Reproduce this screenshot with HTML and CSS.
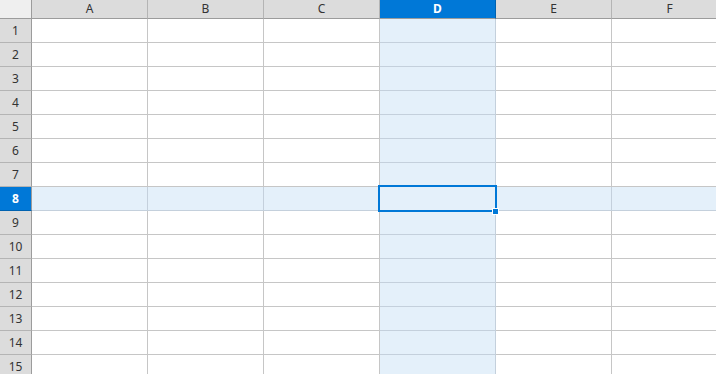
FILE: index.html
```html
<!DOCTYPE html>
<html lang="en">
<head>
  <meta charset="UTF-8">
  <title>Sheet</title>
  <link rel="stylesheet" href="styles.css">
</head>
<body>
  <!-- 스프레드시트 그리드 -->
  <div class="sheet" id="sheet"></div>

  <script>
    // 그리드 만들기
    const cols = ['A', 'B', 'C', 'D', 'E', 'F'];
    const activeCol = 'D';
    const activeRow = 8;
    const sheet = document.getElementById('sheet');
    let html = '<div class="corner"></div>';

    cols.forEach(c => {
      html += `<div class="col-head${c === activeCol ? ' active' : ''}">${c}</div>`;
    });

    for (let r = 1; r <= 15; r++) {
      html += `<div class="row-head${r === activeRow ? ' active' : ''}">${r}</div>`;
      cols.forEach(c => {
        let cls = 'cell';
        if (c === activeCol || r === activeRow) cls += ' hl';
        if (c === activeCol && r === activeRow) cls += ' selected';
        html += `<div class="${cls}"></div>`;
      });
    }
    sheet.innerHTML = html;
  </script>
</body>
</html>
```

FILE: styles.css
```css
/* 기본 스타일 */
body {
  margin: 0;
  font-family: "Noto Sans", "Open Sans", sans-serif;
  font-size: 12px;
  color: #333;
  background: #fff;
  overflow: hidden;
}

.sheet {
  display: grid;
  grid-template-columns: 32px repeat(6, 116px);
  grid-template-rows: 19px;
  grid-auto-rows: 24px;
  width: max-content;
}

.sheet > div {
  box-sizing: border-box;
  border-right: 1px solid #c6c6c6;
  border-bottom: 1px solid #c6c6c6;
}

/* 헤더 */
.corner {
  background: #efefef;
  border-right-color: #9c9c9c !important;
  border-bottom-color: #9c9c9c !important;
}

.col-head,
.row-head {
  background: #dcdcdc;
  display: flex;
  align-items: center;
  justify-content: center;
  line-height: 1;
}

.col-head {
  border-right-color: #b4b4b4 !important;
  border-bottom-color: #9c9c9c !important;
}

.row-head {
  border-right-color: #9c9c9c !important;
  border-bottom-color: #b4b4b4 !important;
}

.col-head.active,
.row-head.active {
  background: #0078d7;
  color: #fff;
  font-weight: bold;
}

.col-head.active {
  border-right-color: #0062b0 !important;
}

.row-head.active {
  border-bottom-color: #0062b0 !important;
}

/* 셀 */
.cell.hl {
  background: #e4f0fa;
  border-color: #c4d0dc !important;
}

.cell.selected {
  position: relative;
}

.cell.selected::before {
  content: "";
  position: absolute;
  top: -2px;
  left: -2px;
  right: -2px;
  bottom: -2px;
  border: 2px solid #0078d7;
}

.cell.selected::after {
  content: "";
  position: absolute;
  right: -3px;
  bottom: -4px;
  width: 5px;
  height: 5px;
  background: #0078d7;
  outline: 1px solid #fff;
}
```
